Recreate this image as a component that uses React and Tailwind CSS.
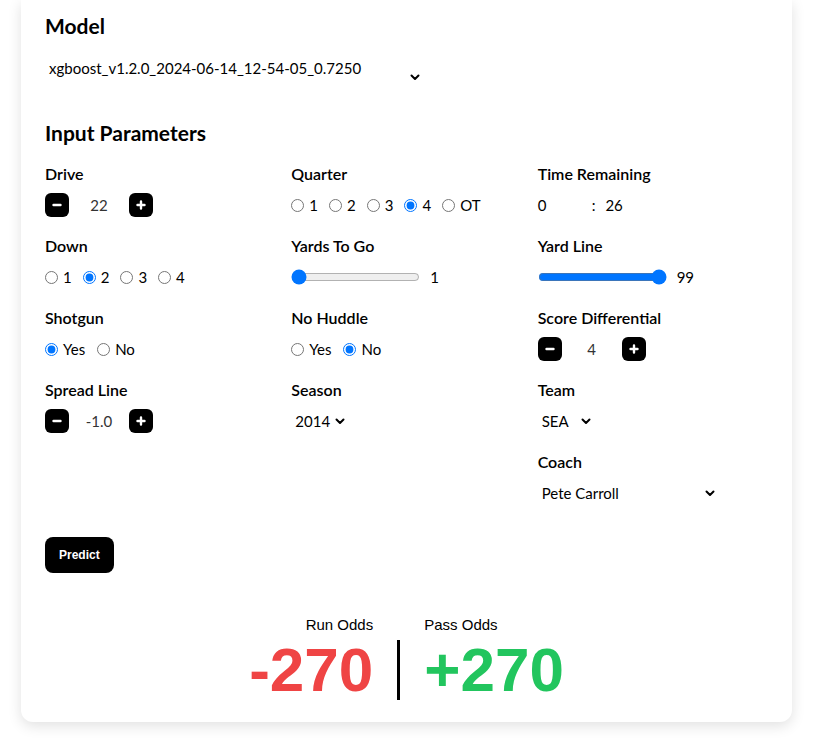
import { useState } from "react";

function Chevron({ className = "" }) {
  return (
    <svg width="10" height="7" viewBox="0 0 10 7" className={className}>
      <path d="M1.5 1.5 L5 5 L8.5 1.5" fill="none" stroke="#000" strokeWidth="2" strokeLinecap="round" strokeLinejoin="round" />
    </svg>
  );
}

function Label({ children }) {
  return <div className="text-[16px] leading-[22px] font-semibold text-black mb-2">{children}</div>;
}

function Stepper({ value }) {
  return (
    <div className="flex items-center h-6">
      <button className="w-6 h-6 rounded-md bg-black flex items-center justify-center">
        <svg width="12" height="12" viewBox="0 0 12 12">
          <path d="M2.5 6 H9.5" stroke="#fff" strokeWidth="2.4" strokeLinecap="round" />
        </svg>
      </button>
      <div className="w-[60px] text-center text-[15px] text-[#333]">{value}</div>
      <button className="w-6 h-6 rounded-md bg-black flex items-center justify-center">
        <svg width="12" height="12" viewBox="0 0 12 12">
          <path d="M2.5 6 H9.5 M6 2.5 V9.5" stroke="#fff" strokeWidth="2.4" strokeLinecap="round" />
        </svg>
      </button>
    </div>
  );
}

function Radios({ name, options, checked, gap = "gap-3" }) {
  return (
    <div className={`flex items-center h-6 text-[15px] ${gap}`}>
      {options.map((o) => (
        <label key={o} className="flex items-center gap-[5px]">
          <input type="radio" name={name} defaultChecked={o === checked} className="w-[13px] h-[13px]" />
          <span>{o}</span>
        </label>
      ))}
    </div>
  );
}

function Slider({ value, min, max }) {
  return (
    <div className="flex items-center gap-2.5 h-6 text-[15px]">
      <input type="range" min={min} max={max} defaultValue={value} className="w-[129px]" />
      <span>{value}</span>
    </div>
  );
}

function Select({ value, width }) {
  return (
    <div className={`flex items-center justify-between h-6 pl-1 pr-1 text-[15px] ${width}`}>
      <span>{value}</span>
      <Chevron />
    </div>
  );
}

export default function App() {
  const [model] = useState("xgboost_v1.2.0_2024-06-14_12-54-05_0.7250");

  return (
    <div className="min-h-[741px] bg-white px-[21px] text-black" style={{ fontFamily: 'Lato, "Open Sans", sans-serif' }}>
      <div className="bg-white rounded-b-xl shadow-[0_4px_14px_rgba(0,0,0,0.12)] px-6 pt-3 pb-[22px]">
        <h2 className="text-[21px] leading-7 font-bold">Model</h2>
        <div className="w-[375px] h-7 mt-[18px] flex justify-between text-[15px] pl-1">
          <span className="leading-5 self-start">{model}</span>
          <Chevron className="self-end mb-[5px]" />
        </div>

        <h2 className="text-[21px] leading-7 font-bold mt-[33px]">Input Parameters</h2>

        <div className="grid grid-cols-3 gap-x-4 gap-y-[18px] mt-[16px]">
          <div>
            <Label>Drive</Label>
            <Stepper value="22" />
          </div>
          <div>
            <Label>Quarter</Label>
            <Radios name="q" options={["1", "2", "3", "4", "OT"]} checked="4" gap="gap-[11px]" />
          </div>
          <div>
            <Label>Time Remaining</Label>
            <div className="flex items-center h-6 text-[15px]">
              <span className="w-[54px]">0</span>
              <span>:</span>
              <span className="ml-[10px]">26</span>
            </div>
          </div>

          <div>
            <Label>Down</Label>
            <Radios name="d" options={["1", "2", "3", "4"]} checked="2" gap="gap-[11px]" />
          </div>
          <div>
            <Label>Yards To Go</Label>
            <Slider value={1} min={1} max={99} />
          </div>
          <div>
            <Label>Yard Line</Label>
            <Slider value={99} min={1} max={99} />
          </div>

          <div>
            <Label>Shotgun</Label>
            <Radios name="s" options={["Yes", "No"]} checked="Yes" />
          </div>
          <div>
            <Label>No Huddle</Label>
            <Radios name="n" options={["Yes", "No"]} checked="No" />
          </div>
          <div>
            <Label>Score Differential</Label>
            <Stepper value="4" />
          </div>

          <div>
            <Label>Spread Line</Label>
            <Stepper value="-1.0" />
          </div>
          <div>
            <Label>Season</Label>
            <Select value="2014" width="w-[58px]" />
          </div>
          <div>
            <Label>Team</Label>
            <Select value="SEA" width="w-[57px]" />
          </div>

          <div className="col-start-3">
            <Label>Coach</Label>
            <Select value="Pete Carroll" width="w-[181px]" />
          </div>
        </div>

        <button
          className="mt-8 h-9 px-[14px] rounded-lg bg-black text-white text-xs font-bold"
          style={{ fontFamily: '"Liberation Sans", Arial, sans-serif' }}
        >
          Predict
        </button>

        <div className="flex justify-center items-end gap-6 mt-[42px]" style={{ fontFamily: '"Liberation Sans", Arial, sans-serif' }}>
          <div className="flex flex-col items-end">
            <div className="text-[15px] leading-5 mb-[5px]">Run Odds</div>
            <div className="text-[62px] leading-[60px] font-bold text-[#ef4444]">-270</div>
          </div>
          <div className="w-[3px] h-[60px] bg-black" />
          <div className="flex flex-col items-start">
            <div className="text-[15px] leading-5 mb-[5px]">Pass Odds</div>
            <div className="text-[62px] leading-[60px] font-bold text-[#22c55e]">+270</div>
          </div>
        </div>
      </div>
    </div>
  );
}
